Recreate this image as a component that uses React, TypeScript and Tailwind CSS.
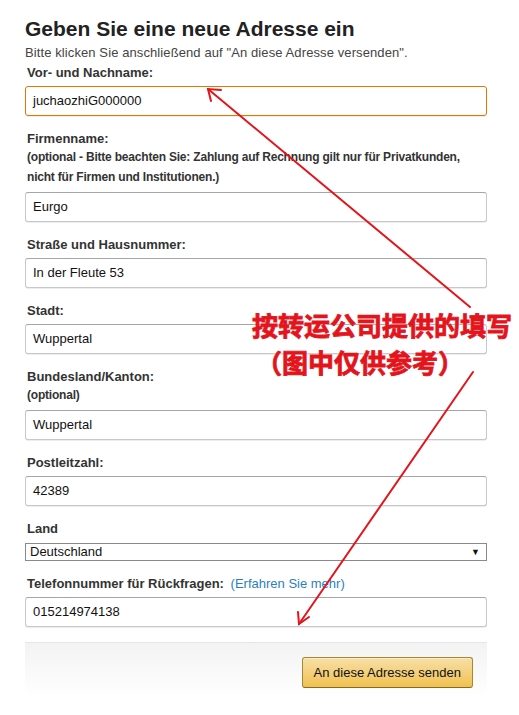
import React from "react";

const inputBase =
  "h-[30px] w-full rounded-[3px] border border-[#c8c8c8] border-t-[#a6a6a6] bg-white px-[7px] text-[13px] text-[#111] shadow-[inset_0_1px_0_rgba(255,255,255,0.5),0_1px_0_rgba(0,0,0,0.07)] flex items-center";

function Field({
  label,
  value,
  hint,
}: {
  label: React.ReactNode;
  value: string;
  hint?: React.ReactNode;
}) {
  return (
    <div className="mt-[15px] flex flex-col">
      <label className="pl-[2px] text-[13px] leading-[16px] font-bold text-[#333]">{label}</label>
      {hint && (
        <div className="pl-[2px] text-[12px] leading-[20px] font-bold tracking-[-0.2px] text-[#333]">{hint}</div>
      )}
      <div className={inputBase + " mt-[5px]"}>{value}</div>
    </div>
  );
}

export default function App() {
  return (
    <div className="relative min-h-[715px] w-[519px] bg-white font-['Liberation_Sans',Arial,sans-serif] text-[#111]">
      <div className="ml-[25px] w-[462px] pt-[17px]">
        <h1 className="text-[21px] leading-[24px] font-bold text-[#222]">Geben Sie eine neue Adresse ein</h1>
        <p className="mt-[4px] text-[13px] leading-[16px] tracking-[0.1px] text-[#444]">
          Bitte klicken Sie anschließend auf "An diese Adresse versenden".
        </p>

        <div className="flex flex-col">
          <label className="mt-[4px] pl-[2px] text-[13px] leading-[16px] font-bold text-[#333]">Vor- und Nachname:</label>
          <div className={inputBase + " mt-[5px] !border-[#e77600] shadow-[0_0_3px_2px_rgba(228,121,17,0.35)]"}>
            juchaozhiG000000
          </div>
        </div>

        <Field
          label="Firmenname:"
          hint={
            <>
              (optional - Bitte beachten Sie: Zahlung auf Rechnung gilt nur für Privatkunden,
              <br />
              nicht für Firmen und Institutionen.)
            </>
          }
          value="Eurgo"
        />
        <Field label="Straße und Hausnummer:" value="In der Fleute 53" />
        <Field label="Stadt:" value="Wuppertal" />
        <Field label="Bundesland/Kanton:" hint="(optional)" value="Wuppertal" />
        <Field label="Postleitzahl:" value="42389" />

        <div className="mt-[15px] flex flex-col">
          <label className="pl-[2px] text-[13px] leading-[16px] font-bold text-[#333]">Land</label>
          <div className="mt-[6px] flex h-[18px] items-center justify-between border border-[#8a8a8a] bg-white pr-[6px] pl-[4px] text-[13px] text-[#111]">
            <span>Deutschland</span>
            <span className="text-[9px] leading-none">▼</span>
          </div>
        </div>

        <Field
          label={
            <>
              Telefonnummer für Rückfragen:{" "}
              <span className="ml-[3px] font-normal text-[#2a7fbf]">(Erfahren Sie mehr)</span>
            </>
          }
          value="015214974138"
        />

        <div className="mt-[15px] flex h-[56px] justify-end border-t border-[#e5e5e5] bg-gradient-to-b from-[#f3f3f3] to-white pt-[14px] pr-[14px]">
          <button className="h-[31px] rounded-[3px] border border-[#a88734] border-b-[#846a29] bg-gradient-to-b from-[#f7dfa5] to-[#f0c14b] px-[11px] text-[13px] text-[#111] shadow-[inset_0_1px_0_rgba(255,255,255,0.4)]">
            An diese Adresse senden
          </button>
        </div>
      </div>

      {/* annotation overlay */}
      <svg className="pointer-events-none absolute inset-0" width="519" height="715">
        <g stroke="#e3141c" strokeWidth="2" fill="none" strokeLinecap="round">
          <line x1="470" y1="307" x2="208" y2="89" />
          <polyline points="221,90 208,89 211,101" />
          <line x1="473" y1="372" x2="299" y2="624" />
          <polyline points="298,612 299,624 309,617" />
        </g>
      </svg>
      <div className="pointer-events-none absolute top-[306px] left-[252px] text-[26px] leading-[37px] font-bold text-[#e3141c] font-['Noto_Sans_CJK_SC',sans-serif] [-webkit-text-stroke:0.8px_#e3141c] [text-shadow:0_0_3px_white]">
        <div>按转运公司提供的填写</div>
        <div className="pl-[4px]">（图中仅供参考）</div>
      </div>
    </div>
  );
}
